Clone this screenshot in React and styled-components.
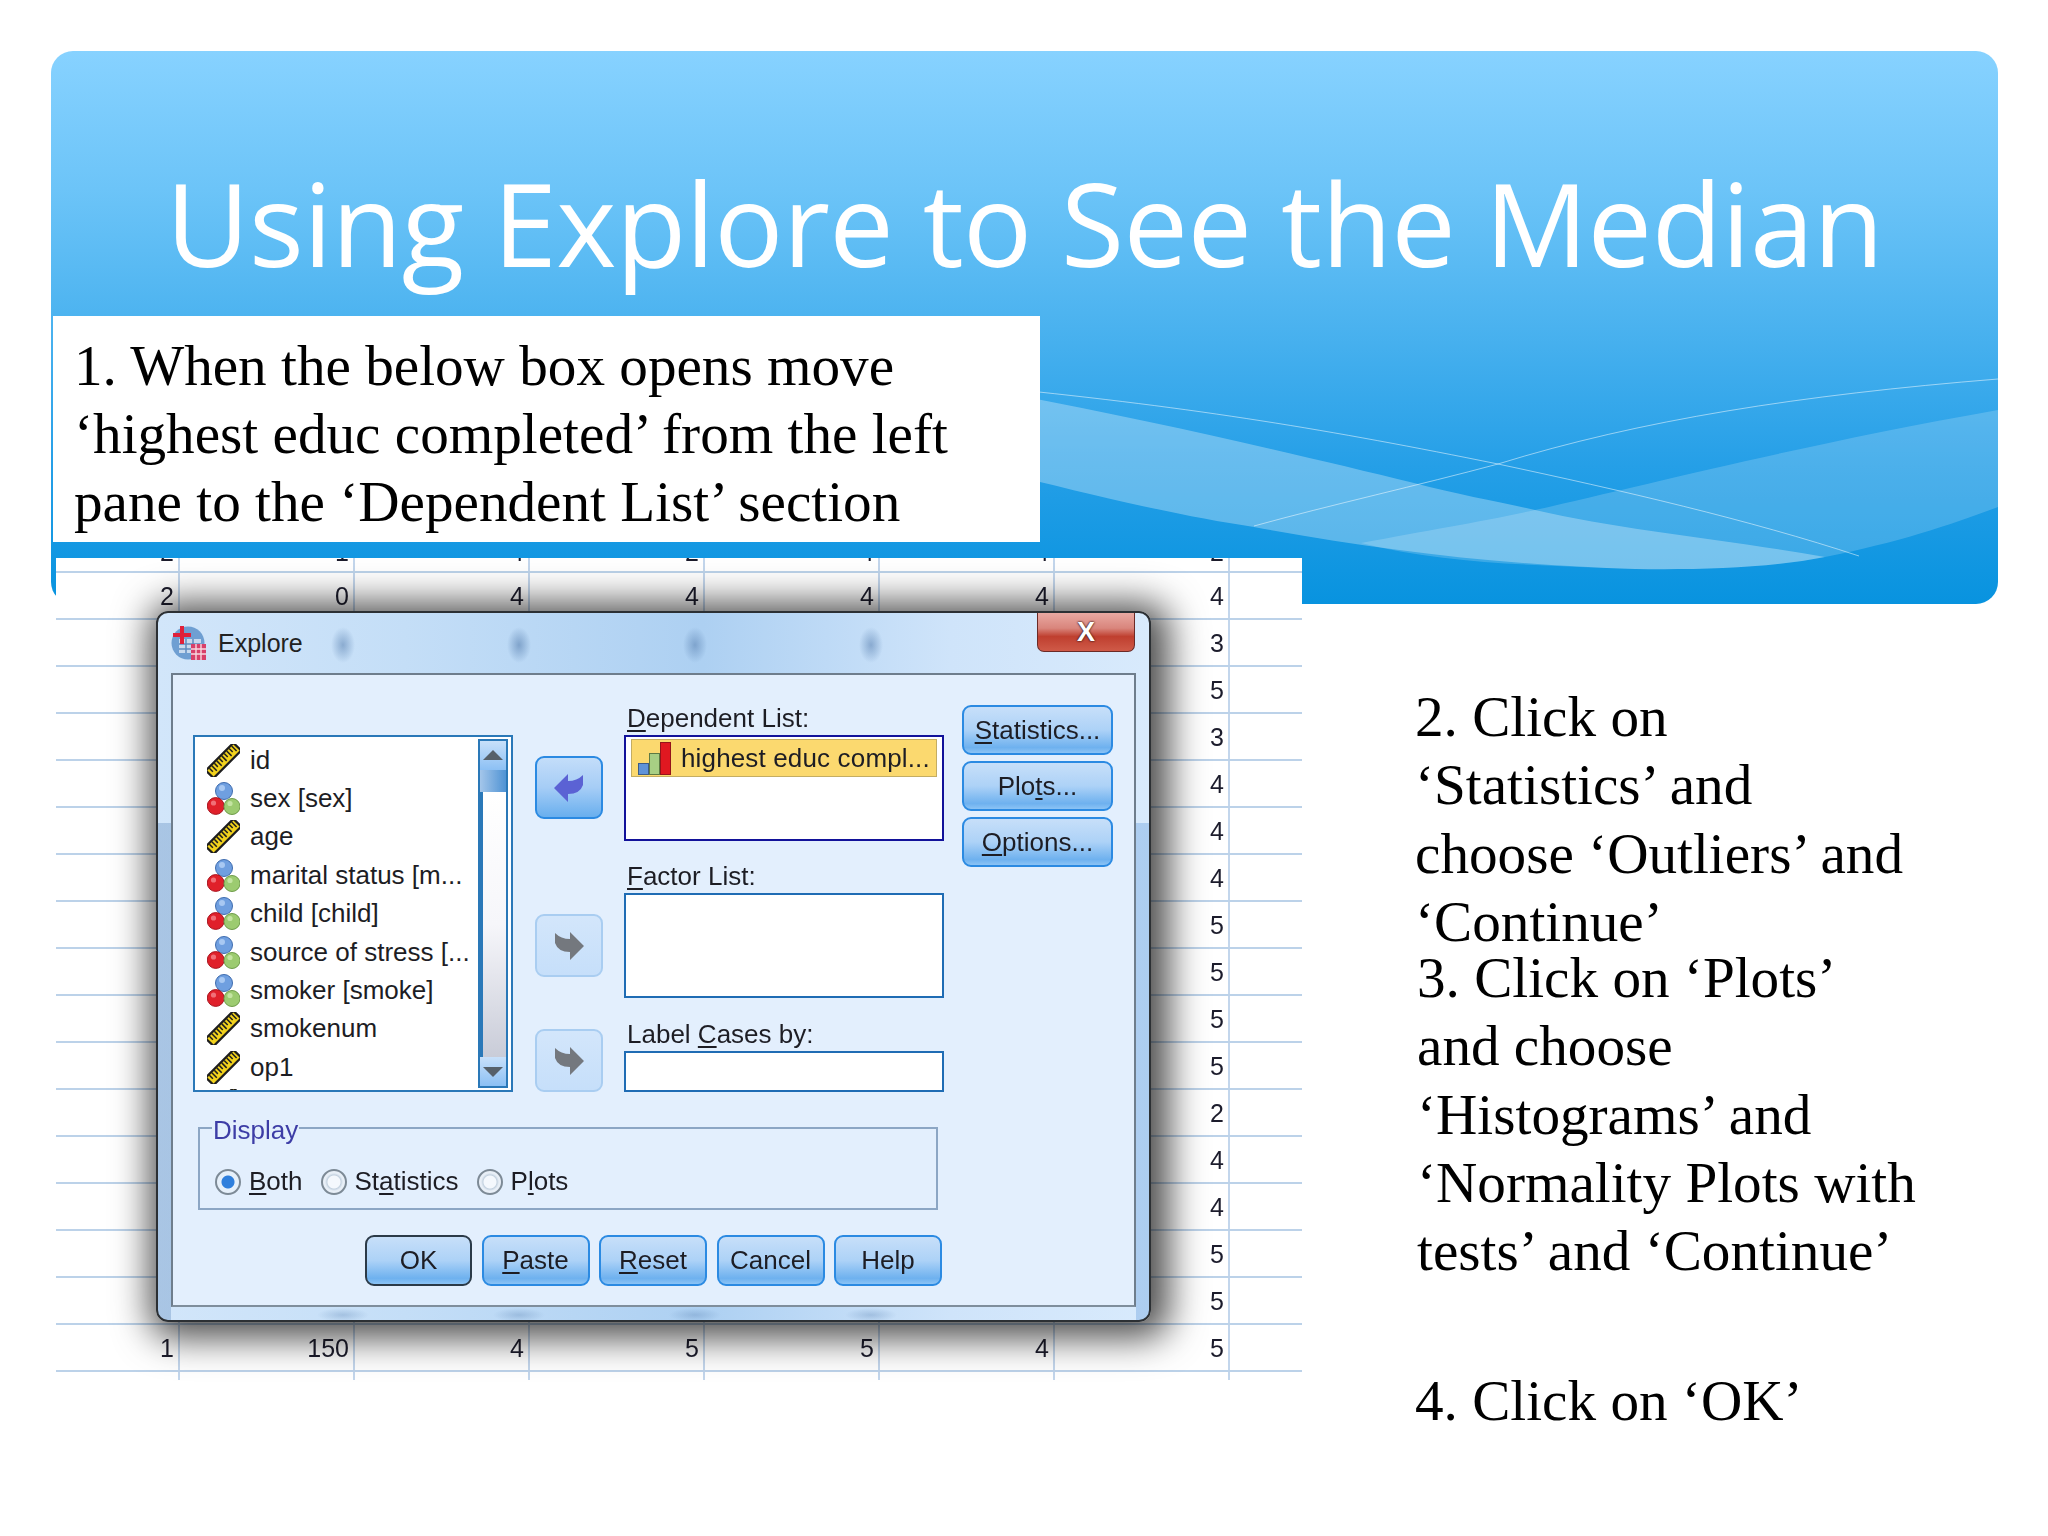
import React from "react";
import styled, { createGlobalStyle } from "styled-components";

const GlobalStyle = createGlobalStyle`
  html, body {
    margin: 0;
    padding: 0;
    background: #fff;
  }
  * {
    box-sizing: border-box;
  }
`;

const Slide = styled.div`
  width: 2048px;
  height: 1536px;
  padding: 51px 50px 0 51px;
  overflow: hidden;
  background: #fff;
`;

const Banner = styled.header`
  position: relative;
  height: 553px;
  border-radius: 22px;
  overflow: hidden;
  background: linear-gradient(180deg, #87d2ff 0%, #6cc4f8 25%, #4ab2ef 50%, #259fe7 75%, #0893df 100%);
`;

const Waves = styled.svg`
  position: absolute;
  inset: 0;
  width: 100%;
  height: 100%;
`;

const Title = styled.h1`
  position: relative;
  height: 265px;
  margin: 0;
  padding-top: 103px;
  text-align: center;
  white-space: nowrap;
  color: #fff;
  font-family: "Open Sans", "Liberation Sans", sans-serif;
  font-size: 115px;
  font-weight: 400;
  letter-spacing: -0.55px;
  line-height: 138px;
`;

const Serif = styled.p`
  margin: 0;
  white-space: nowrap;
  color: #000;
  font-family: "Liberation Serif", serif;
  font-size: 57.2px;
  line-height: 68.3px;
`;

const IntroBox = styled(Serif)`
  position: relative;
  width: 987px;
  height: 226px;
  margin-left: 2px;
  padding: 15.5px 0 0 21px;
  background: #fff;
`;

const Content = styled.main`
  position: relative;
  display: grid;
  grid-template-columns: 1251px 1fr;
  margin-top: -46px;
`;

const Sheet = styled.section`
  position: relative;
  width: 1246px;
  margin-left: 5px;
  background: #fff;
`;

const SheetRow = styled.div`
  display: grid;
  grid-template-columns: 124px repeat(6, 175px) 72px;
  grid-template-rows: minmax(0, 1fr);
  height: ${(p) => p.$height}px;
  overflow: hidden;
  border-bottom: ${(p) => (p.$open ? 0 : 2)}px solid #bcd2e9;
`;

const SheetCell = styled.div`
  display: flex;
  align-items: flex-end;
  justify-content: flex-end;
  padding-right: 4px;
  overflow: hidden;
  border-right: 2px solid #c3d6ec;
  color: #1c1c2c;
  font-family: "Liberation Sans", sans-serif;
  font-size: 25px;
  line-height: ${(p) => p.$line}px;
  filter: blur(0.3px);
  &:last-child {
    border-right: 0;
  }
`;

const Dialog = styled.div`
  position: absolute;
  top: 53px;
  left: 100px;
  display: flex;
  flex-direction: column;
  width: 995px;
  height: 711px;
  border: 2px solid #2c3034;
  border-radius: 12px;
  background:
    linear-gradient(rgba(112, 152, 198, 0.42), rgba(112, 152, 198, 0.42)) left 0 top 210px / 13px 100% no-repeat,
    linear-gradient(rgba(120, 170, 225, 0.45), rgba(120, 170, 225, 0.45)) right 0 top 210px / 13px 100% no-repeat,
    radial-gradient(ellipse 12px 18px at 185px 32px, rgba(88, 128, 176, 0.55), transparent),
    radial-gradient(ellipse 12px 18px at 361px 32px, rgba(88, 128, 176, 0.6), transparent),
    radial-gradient(ellipse 12px 18px at 537px 32px, rgba(88, 128, 176, 0.55), transparent),
    radial-gradient(ellipse 12px 18px at 713px 32px, rgba(88, 128, 176, 0.55), transparent),
    radial-gradient(ellipse 26px 7px at 185px 702px, rgba(88, 128, 176, 0.32), transparent),
    radial-gradient(ellipse 26px 7px at 361px 702px, rgba(88, 128, 176, 0.32), transparent),
    radial-gradient(ellipse 26px 7px at 537px 702px, rgba(88, 128, 176, 0.32), transparent),
    radial-gradient(ellipse 26px 7px at 713px 702px, rgba(88, 128, 176, 0.32), transparent),
    linear-gradient(90deg, #d2e6fa 0%, #c4def7 25%, #add0f2 55%, #cfe4fa 80%, #d8eafc 100%);
  box-shadow: 6px 4px 36px 12px rgba(0, 0, 0, 0.7);
`;

const TitleBar = styled.div`
  display: flex;
  align-items: flex-start;
  flex: none;
  height: 60px;
  padding: 12px 14px 0 13px;
  color: #222;
  font-family: "Liberation Sans", sans-serif;
  font-size: 25px;
`;

const TitleText = styled.span`
  margin: 4px 0 0 11px;
`;

const CloseButton = styled.div`
  display: flex;
  align-items: center;
  justify-content: center;
  width: 98px;
  height: 39px;
  margin: -12px 0 0 auto;
  border: 1px solid #6b2a26;
  border-top: 0;
  border-radius: 0 0 7px 7px;
  background: linear-gradient(180deg, #e9a9a2 0%, #d9857c 40%, #bf3f2f 62%, #cf5a48 100%);
  color: #fff;
  font-family: "Liberation Sans", sans-serif;
  font-size: 27px;
  font-weight: 700;
  text-shadow: 0 0 2px #3a1a18, 0 0 2px #3a1a18;
`;

const Client = styled.div`
  flex: none;
  height: 634px;
  margin: 0 13px;
  padding: 30px 0 0 20px;
  border: 2px solid #6e7d8c;
  border-bottom-color: #7f8e9c;
  background: #e3effd;
  color: #1d1d24;
  font-family: "Liberation Sans", sans-serif;
  font-size: 26px;
`;

const Columns = styled.div`
  display: grid;
  grid-template-columns: 321px 68px 320px 151px;
  column-gap: 21px;
  align-items: start;
  filter: blur(0.3px);
`;

const SourceList = styled.div`
  display: flex;
  width: 320px;
  height: 357px;
  margin-top: 30px;
  border: 2px solid #2a78b8;
  background: #fff;
`;

const Items = styled.div`
  flex: 1;
  min-width: 0;
  padding-top: 4px;
  overflow: hidden;
`;

const Item = styled.div`
  display: flex;
  align-items: center;
  gap: 10px;
  height: 38.4px;
  padding-left: 12px;
  white-space: nowrap;
`;

const Scrollbar = styled.div`
  display: flex;
  flex-direction: column;
  flex: none;
  width: 30px;
  margin: 2px 3px 2px 0;
  border: 2px solid #2a78b8;
  background: linear-gradient(90deg, #f6f6fa, #fff 30%, #cfd2dc);
`;

const ScrollButton = styled.div`
  display: flex;
  align-items: center;
  justify-content: center;
  flex: none;
  height: 29px;
  background: linear-gradient(180deg, #c8e0fa, #8cc0f4);
`;

const ScrollThumb = styled.div`
  flex: none;
  height: 22px;
  background: linear-gradient(90deg, #a4c6ea, #4f93d4);
`;

const ScrollTrack = styled.div`
  flex: 1;
  border-left: 3px solid #2a78b8;
  background: linear-gradient(180deg, #fff 0%, #f6f6fa 50%, #c9ccd8 100%);
`;

const ArrowColumn = styled.div`
  display: flex;
  flex-direction: column;
`;

const ArrowButton = styled.div`
  display: flex;
  align-items: center;
  justify-content: center;
  height: 63px;
  margin-top: ${(p) => p.$gap}px;
  border: 2px solid ${(p) => (p.$active ? "#2b8ae2" : "#a9cdf1")};
  border-radius: 9px;
  background: ${(p) =>
    p.$active
      ? "linear-gradient(180deg, #c3ddf9 0%, #a6cdf6 50%, #69afee 100%)"
      : "linear-gradient(180deg, #d3e6fb 0%, #c6dffa 100%)"};
`;

const FieldColumn = styled.div`
  display: flex;
  flex-direction: column;
`;

const FieldLabel = styled.div`
  height: 30px;
  margin-top: ${(p) => p.$gap}px;
  line-height: 26px;
  white-space: nowrap;
  padding-left: 3px;
`;

const Field = styled.div`
  height: ${(p) => p.$height}px;
  padding: 2px 5px;
  border: 2px solid ${(p) => (p.$focused ? "#12129a" : "#1f6cb4")};
  background: #fff;
`;

const SelectedItem = styled.div`
  display: flex;
  align-items: center;
  gap: 10px;
  height: 38px;
  padding-left: 6px;
  border: 1px solid #c4ad62;
  background: #fbd96f;
  letter-spacing: 0.15px;
  white-space: nowrap;
`;

const SideColumn = styled.div`
  display: flex;
  flex-direction: column;
  gap: 6px;
  margin-left: -3px;
`;

const DialogButton = styled.div`
  display: flex;
  align-items: center;
  justify-content: center;
  width: ${(p) => p.$width || 108}px;
  height: ${(p) => p.$height || 51}px;
  border: 2px solid ${(p) => (p.$default ? "#2b3a48" : "#2b8ae2")};
  border-radius: 9px;
  background: linear-gradient(180deg, #c7dff9 0%, #add2f7 50%, #6eb1ef 88%, #8bc3f5 100%);
  white-space: nowrap;
`;

const DisplayGroup = styled.fieldset`
  width: 740px;
  height: 99px;
  margin: 19px 0 0 5px;
  padding: 21px 0 0 15px;
  border: 2px solid #8ca6c4;
  filter: blur(0.3px);
`;

const GroupLegend = styled.legend`
  margin-left: -3px;
  padding: 4px 1px 0;
  color: #3d3da6;
  line-height: 30px;
`;

const RadioRow = styled.div`
  display: flex;
  align-items: center;
  gap: 18px;
`;

const RadioOption = styled.label`
  display: flex;
  align-items: center;
  gap: 8px;
`;

const RadioMark = styled.span`
  flex: none;
  width: 26px;
  height: 26px;
  border: 2px solid #7d8a96;
  border-radius: 50%;
  background: ${(p) =>
    p.$checked
      ? "radial-gradient(circle, #2f7fdc 0 6px, #e6f0fa 7px)"
      : "radial-gradient(circle, #f4f8fd 0 6px, #c4d2e0 7px, #e8eff7 9px)"};
`;

const ButtonRow = styled.div`
  display: flex;
  gap: 9.5px;
  margin: 25px 0 0 172px;
  filter: blur(0.3px);
`;

const Key = styled.span`
  text-decoration: underline;
  text-underline-offset: 3px;
`;

const Notes = styled.aside`
  display: flex;
  flex-direction: column;
  padding: 125px 0 0 113px;
`;

const Note = styled(Serif)`
  margin-top: ${(p) => p.$gap || 0}px;
  margin-left: ${(p) => p.$shift || 0}px;
`;

function Ruler() {
  return (
    <svg width="33" height="33" viewBox="0 0 33 33">
      <g transform="rotate(-45 16.5 16.5)">
        <rect x="-3" y="11" width="39" height="11" fill="#f2d21c" stroke="#1e1e1e" strokeWidth="2.2" />
        <path
          d="M1 12v5M4.5 12v7M8 12v5M11.5 12v7M15 12v5M18.5 12v7M22 12v5M25.5 12v7M29 12v5M32.5 12v7"
          stroke="#1e1e1e"
          strokeWidth="1.5"
        />
      </g>
    </svg>
  );
}

function Balls() {
  return (
    <svg width="33" height="33" viewBox="0 0 33 33">
      <circle cx="17" cy="9" r="8.5" fill="#6f9fe0" stroke="#3f6cae" />
      <circle cx="8.7" cy="24" r="8.4" fill="#e0202a" stroke="#a81620" />
      <circle cx="25" cy="24.5" r="8" fill="#9ccb70" stroke="#6f9c4a" />
      <circle cx="15" cy="6" r="3" fill="#a8c8f2" />
      <circle cx="6.5" cy="21" r="2.6" fill="#f07078" />
      <circle cx="23" cy="21.5" r="2.6" fill="#c4e4a2" />
    </svg>
  );
}

function Bars() {
  return (
    <svg width="33" height="33" viewBox="0 0 33 33">
      <rect x="0.5" y="21.5" width="10" height="11" fill="#5f93d8" stroke="#3c5c88" />
      <rect x="11.5" y="11.5" width="10" height="21" fill="#a8cf84" stroke="#5d7a44" />
      <rect x="22.5" y="0.5" width="10" height="32" fill="#e01820" stroke="#94141a" />
    </svg>
  );
}

function Logo() {
  return (
    <svg width="36" height="36" viewBox="0 0 36 36">
      <circle cx="17" cy="18" r="16.5" fill="#6f9fd2" />
      <path d="M8 14h22v14H8z" fill="#c8daee" />
      <path d="M8 19h22M8 24h22M15 14v14M22 14v14" stroke="#5f8cc0" strokeWidth="1.5" />
      <path d="M9 1h4v7h7v4h-7v7H9v-7H2V8h7z" fill="#e0203a" />
      <rect x="20" y="19" width="15" height="16" fill="#d8406a" />
      <path d="M20 24h15M20 29h15M25 19v16M30 19v16" stroke="#f7d8e0" strokeWidth="1.4" />
    </svg>
  );
}

function BentArrow({ left, color }) {
  return (
    <svg width="32" height="30" viewBox="0 0 32 30">
      <path
        d={
          left
            ? "M1 15L15 1v7q9 0 15-6v10q-3 9-15 9v8z"
            : "M31 15L17 1v7q-9 0-15-6v10q3 9 15 9v8z"
        }
        fill={color}
      />
    </svg>
  );
}

function ScrollArrow({ down }) {
  return (
    <svg width="20" height="11" viewBox="0 0 20 11">
      <path d={down ? "M0 1h20l-10 10z" : "M0 10h20L10 0z"} fill="#56606a" />
    </svg>
  );
}

const variables = [
  ["scale", "id"],
  ["nominal", "sex [sex]"],
  ["scale", "age"],
  ["nominal", "marital status [m..."],
  ["nominal", "child [child]"],
  ["nominal", "source of stress [..."],
  ["nominal", "smoker [smoke]"],
  ["scale", "smokenum"],
  ["scale", "op1"],
  ["scale", ""],
];

const lastColumn = ["3", "5", "3", "4", "4", "4", "5", "5", "5", "5", "2", "4", "4", "5", "5"];

const sheetRows = [
  { id: "clipped", height: 15, line: 37, cells: ["2", "1", "4", "2", "4", "4", "2", ""] },
  { id: "first", height: 47, line: 44, cells: ["2", "0", "4", "4", "4", "4", "4", ""] },
  ...lastColumn.map((value, index) => ({
    id: "row" + index,
    height: 47,
    line: 44,
    cells: ["", "", "", "", "", "", value, ""],
  })),
  { id: "last", height: 47, line: 44, cells: ["1", "150", "4", "5", "5", "4", "5", ""] },
];

export default function App() {
  return (
    <Slide>
      <GlobalStyle />
      <Banner>
        <Waves viewBox="51 51 1947 553" preserveAspectRatio="none">
          <path
            d="M1000 392C1150 420 1300 455 1414 483C1460 495 1500 502 1535 510C1620 530 1730 540 1825 557C1770 568 1700 570 1635 569C1500 565 1380 550 1254 527C1180 516 1100 497 1000 472Z"
            fill="#fff"
            opacity="0.3"
          />
          <path
            d="M1361 543C1430 530 1480 522 1535 510C1650 484 1800 445 1998 410L1998 507C1950 525 1900 542 1825 557C1770 568 1700 570 1635 569C1540 565 1450 565 1361 543Z"
            fill="#fff"
            opacity="0.18"
          />
          <path
            d="M1000 388C1200 408 1330 430 1498 464C1620 490 1750 520 1859 556"
            fill="none"
            stroke="#fff"
            strokeOpacity="0.5"
            strokeWidth="1"
          />
          <path
            d="M1254 526C1330 505 1420 485 1498 464C1640 420 1800 395 1998 379"
            fill="none"
            stroke="#fff"
            strokeOpacity="0.5"
            strokeWidth="1"
          />
        </Waves>
        <Title>Using Explore to See the Median</Title>
        <IntroBox>
          1. When the below box opens move
          <br />
          ‘highest educ completed’ from the left
          <br />
          pane to the ‘Dependent List’ section
        </IntroBox>
      </Banner>
      <Content>
        <Sheet>
          {sheetRows.map((row) => (
            <SheetRow key={row.id} $height={row.height}>
              {row.cells.map((cell, index) => (
                <SheetCell key={index} $line={row.line}>
                  {cell}
                </SheetCell>
              ))}
            </SheetRow>
          ))}
          <SheetRow $height={8} $open>
            {["a", "b", "c", "d", "e", "f", "g", "h"].map((cell) => (
              <SheetCell key={cell} $line={8} />
            ))}
          </SheetRow>
          <Dialog>
            <TitleBar>
              <Logo />
              <TitleText>Explore</TitleText>
              <CloseButton>X</CloseButton>
            </TitleBar>
            <Client>
              <Columns>
                <SourceList>
                  <Items>
                    {variables.map(([kind, label], index) => (
                      <Item key={index}>
                        {kind === "scale" ? <Ruler /> : <Balls />}
                        {label}
                      </Item>
                    ))}
                  </Items>
                  <Scrollbar>
                    <ScrollButton>
                      <ScrollArrow />
                    </ScrollButton>
                    <ScrollThumb />
                    <ScrollTrack />
                    <ScrollButton>
                      <ScrollArrow down />
                    </ScrollButton>
                  </Scrollbar>
                </SourceList>
                <ArrowColumn>
                  <ArrowButton $gap={51} $active>
                    <BentArrow left color="#5b62d4" />
                  </ArrowButton>
                  <ArrowButton $gap={95}>
                    <BentArrow color="#74787e" />
                  </ArrowButton>
                  <ArrowButton $gap={52}>
                    <BentArrow color="#74787e" />
                  </ArrowButton>
                </ArrowColumn>
                <FieldColumn>
                  <FieldLabel>
                    <Key>D</Key>ependent List:
                  </FieldLabel>
                  <Field $height={106} $focused>
                    <SelectedItem>
                      <Bars />
                      highest educ compl...
                    </SelectedItem>
                  </Field>
                  <FieldLabel $gap={22}>
                    <Key>F</Key>actor List:
                  </FieldLabel>
                  <Field $height={105} />
                  <FieldLabel $gap={23}>
                    Label <Key>C</Key>ases by:
                  </FieldLabel>
                  <Field $height={41} />
                </FieldColumn>
                <SideColumn>
                  <DialogButton $width={151} $height={50}>
                    <Key>S</Key>tatistics...
                  </DialogButton>
                  <DialogButton $width={151} $height={50}>
                    Plo<Key>t</Key>s...
                  </DialogButton>
                  <DialogButton $width={151} $height={50}>
                    <Key>O</Key>ptions...
                  </DialogButton>
                </SideColumn>
              </Columns>
              <DisplayGroup>
                <GroupLegend>Display</GroupLegend>
                <RadioRow>
                  <RadioOption>
                    <RadioMark $checked />
                    <span>
                      <Key>B</Key>oth
                    </span>
                  </RadioOption>
                  <RadioOption>
                    <RadioMark />
                    <span>
                      St<Key>a</Key>tistics
                    </span>
                  </RadioOption>
                  <RadioOption>
                    <RadioMark />
                    <span>
                      P<Key>l</Key>ots
                    </span>
                  </RadioOption>
                </RadioRow>
              </DisplayGroup>
              <ButtonRow>
                <DialogButton $default $width={107}>OK</DialogButton>
                <DialogButton>
                  <Key>P</Key>aste
                </DialogButton>
                <DialogButton>
                  <Key>R</Key>eset
                </DialogButton>
                <DialogButton>Cancel</DialogButton>
                <DialogButton>Help</DialogButton>
              </ButtonRow>
            </Client>
          </Dialog>
        </Sheet>
        <Notes>
          <Note>
            2. Click on
            <br />
            ‘Statistics’ and
            <br />
            choose ‘Outliers’ and
            <br />
            ‘Continue’
          </Note>
          <Note $gap={-12} $shift={2}>
            3. Click on ‘Plots’
            <br />
            and choose
            <br />
            ‘Histograms’ and
            <br />
            ‘Normality Plots with
            <br />
            tests’ and ‘Continue’
          </Note>
          <Note $gap={81}>4. Click on ‘OK’</Note>
        </Notes>
      </Content>
    </Slide>
  );
}
